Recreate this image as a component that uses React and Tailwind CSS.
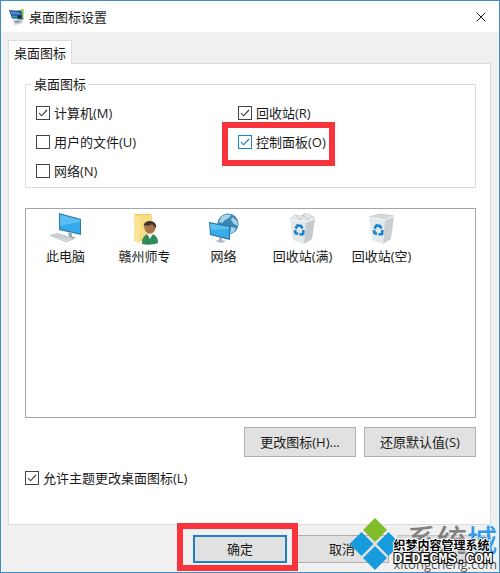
import { useState } from "react";
import { X } from "lucide-react";

const checkItems = [
  { id: "computer", label: "计算机(M)", checked: true },
  { id: "recycle", label: "回收站(R)", checked: true },
  { id: "files", label: "用户的文件(U)", checked: false },
  { id: "control", label: "控制面板(O)", checked: true, highlight: true },
  { id: "network", label: "网络(N)", checked: false },
];

const iconItems = [
  { label: "此电脑", Icon: ComputerIcon },
  { label: "赣州师专", Icon: UserFolderIcon },
  { label: "网络", Icon: NetworkIcon },
  { label: "回收站(满)", Icon: BinFullIcon },
  { label: "回收站(空)", Icon: BinEmptyIcon },
];

function TitleIcon() {
  return (
    <svg className="h-4 w-4" viewBox="0 0 16 16" aria-hidden="true">
      <path d="M7 2 14.500 0V11L9 12z" fill="#7cc043" />
      <path d="M0 1 12 2 13.500 10 3 9.500z" fill="#243f8f" />
      <path d="M1 2 10.500 3 11.500 6 2.200 5.500z" fill="#4a86cf" />
      <path d="M2.500 6.500 8 6.500 9 9 3.500 8.500z" fill="#2fa5a0" />
      <path d="M8 6.500 11.700 6.500 12.200 9.500 9 9z" fill="#1b2a63" />
      <path d="M4 11 12 10.500 14 14 6 16z" fill="#c7ced6" />
      <path d="M5.500 12 11 11.500 11.500 13 6.500 14z" fill="#8d99a6" />
    </svg>
  );
}

function ComputerIcon() {
  return (
    <svg className="h-8 w-8" viewBox="0 0 32 32" aria-hidden="true">
      <path d="M9 0 31 6V22L9 17z" fill="#2b7cb0" />
      <path d="M10 1.500 30 7V20.500L10 16z" fill="#35a9ea" />
      <path d="M10 1.500 30 7V9L10 13z" fill="#58bdf2" />
      <path d="M18 19.500 22 20.500v3l4 1-4 2-5-1.500 2-1z" fill="#9aa5ad" />
      <path d="M0 22.500 7 20.500 24 25.500 17 29z" fill="#dfe5e9" stroke="#a9b4bb" strokeWidth=".7" />
      <path d="M3 22.500 19 27M6 21.700 21.500 26M7 24l4-2M12 25.500l4-2" stroke="#b3bdc4" strokeWidth=".7" />
    </svg>
  );
}

function UserFolderIcon() {
  return (
    <svg className="h-8 w-8" viewBox="0 0 32 32" aria-hidden="true">
      <path d="M5 1h17v27H5z" fill="#efc95c" />
      <path d="M9 2h14v24H9z" fill="#f8dc83" />
      <path d="M5 1 11 5v26l-6-4z" fill="#fae49a" />
      <path d="M13 31c0-7 3-10 8-10s8 3 8 9c-5 2-11 2-16 1z" fill="#2f8a58" />
      <path d="M18 21 21 26 24 21z" fill="#e9f1ec" />
      <circle cx="21" cy="15" r="5.500" fill="#a9724c" />
      <path d="M15 15c-1-5 2-7 6-7s7 3 6 7c-2-1-3-3-4-4-2 2-5 2-7 1z" fill="#40342c" />
    </svg>
  );
}

function NetworkIcon() {
  return (
    <svg className="h-8 w-8" viewBox="0 0 32 32" aria-hidden="true">
      <circle cx="20" cy="11" r="10.500" fill="#3e86b4" />
      <path d="M13 4c3-3 8-3 10-2l-2 3-4 2-3 3-3-1zM24 4l5 4 1 5-4-2-3-4zM23 14l5 1-2 4-4 2z" fill="#a9d4e6" />
      <path d="M1 9 22 13V27L2 22z" fill="#2476aa" />
      <path d="M2 10.500 21 14V25.500L3 21z" fill="#39aaea" />
      <path d="M2 10.500 21 14V16L3 17z" fill="#5dbff2" />
      <path d="M11 24.500 14 25v2.500h4l-4 2.500-7-2 4-1z" fill="#a9b4bb" />
    </svg>
  );
}

function RecycleMark() {
  return (
    <g fill="none" stroke="#1a83cf" strokeWidth="2.600">
      <path d="M8.500 15.500 10.500 12.500l3.500.5 1.500 2.500" />
      <path d="M16.500 17 16 21l-3.500.5" />
      <path d="M11 21 8.500 20 8 17" />
    </g>
  );
}

function BinFullIcon() {
  return (
    <svg className="h-8 w-8" viewBox="0 0 32 32" aria-hidden="true">
      <path d="M3 6 8 2l6 1 4-3 5 2 5 3-2 6H6z" fill="#e6e9ec" stroke="#bfc5ca" strokeWidth=".7" />
      <path d="M9 3 13 7l4-5 3 5 4-3" stroke="#b5bcc2" fill="none" strokeWidth=".8" />
      <path d="M3 7 19 9 17 31 6 27z" fill="#e3e7ea" />
      <path d="M19 9 28 6 25 26 17 31z" fill="#c5cbd0" />
      <path d="M3 7 19 9 28 6" fill="none" stroke="#f7f8f9" />
      <RecycleMark />
    </svg>
  );
}

function BinEmptyIcon() {
  return (
    <svg className="h-8 w-8" viewBox="0 0 32 32" aria-hidden="true">
      <path d="M3 4 14 1 28 3 19 7z" fill="#d2d7da" stroke="#bcc3c7" strokeWidth=".7" />
      <path d="M3 4 19 7 17 31 6 27z" fill="#e6e9ec" />
      <path d="M19 7 28 3 25 26 17 31z" fill="#c9cfd3" />
      <path d="M3 4 19 7 28 3" fill="none" stroke="#f7f8f9" />
      <RecycleMark />
    </svg>
  );
}

function CheckBox({ id, label, defaultChecked, highlight }) {
  const [checked, setChecked] = useState(defaultChecked);

  return (
    <div className="relative flex h-5 items-center gap-1">
      <span className="relative flex h-3.5 w-3.5">
        <input
          id={id}
          type="checkbox"
          checked={checked}
          onChange={(e) => setChecked(e.target.checked)}
          className={`h-3.5 w-3.5 appearance-none border bg-white ${highlight ? "border-[#1883d7]" : "border-[#444444]"}`}
        />
        {checked && (
          <svg className="pointer-events-none absolute inset-0" viewBox="0 0 14 14" fill="none" aria-hidden="true">
            <path d="M3 7 5.500 9.800 11 4" stroke={highlight ? "#1f6fb0" : "#333333"} strokeWidth="1.100" />
          </svg>
        )}
      </span>
      <label htmlFor={id}>{label}</label>
      {highlight && (
        <span className="pointer-events-none absolute -top-2.5 -left-4 h-11 w-[113px] border-6 border-[#f8333c]" />
      )}
    </div>
  );
}

function Watermark() {
  return (
    <div className="pointer-events-none absolute right-0.5 bottom-0 z-20 flex items-end" aria-hidden="true">
      <svg className="-mr-2 mb-0.5 h-[52px] w-[52px] shrink-0" viewBox="0 0 52 52">
        <path d="M26 0 38 12 26 24 14 12z" fill="#80bd28" />
        <path d="M12.500 14 24.500 26 12.500 38 .5 26z" fill="#169bdc" />
        <path d="M39.500 14 51.500 26 39.500 38 27.500 26z" fill="#169bdc" />
        <path d="M26 28 38 40 26 52 14 40z" fill="#169bdc" />
      </svg>
      <div className="relative flex flex-col items-end">
        <span className="text-[30px] leading-8 font-medium text-[#808080]">
          系统<span className="text-[#2f9bea]">城</span>
        </span>
        <span className="text-[13px] leading-4 text-[#555555]">xitongcheng.com</span>
        <div className="absolute top-3.5 left-0 flex flex-col whitespace-nowrap">
          <span className="text-xs leading-4 font-bold text-black [paint-order:stroke_fill] [-webkit-text-stroke:2px_white]">
            织梦内容管理系统
          </span>
          <span className="font-['Liberation_Mono'] text-[15px] leading-3 font-bold text-white [paint-order:stroke_fill] [-webkit-text-stroke:2px_black]">
            DEDECMS.COM
          </span>
        </div>
      </div>
    </div>
  );
}

export default function App() {
  return (
    <div className="relative flex min-h-screen flex-col border border-[#3f8dc4] bg-[#f0f0f0] font-['Open_Sans','Noto_Sans_CJK_SC',sans-serif] text-[13px] leading-5 text-[#1a1a1a]">
      <header className="flex h-[31px] items-center justify-between bg-white pr-2.5 pl-2">
        <div className="flex items-center gap-1">
          <TitleIcon />
          <h1>桌面图标设置</h1>
        </div>
        <button type="button" aria-label="关闭">
          <X className="h-4 w-4" strokeWidth={1.5} />
        </button>
      </header>

      <main className="flex flex-1 flex-col pt-2 pr-2 pl-[7px]">
        <div role="tablist" className="flex">
          <button
            type="button"
            role="tab"
            aria-selected="true"
            className="relative -mb-px h-6 border border-b-0 border-[#dcdcdc] bg-white px-[5px]"
          >
            桌面图标
          </button>
        </div>

        <section className="flex flex-1 flex-col border border-[#dcdcdc] bg-white pt-2.5 pr-3.5 pb-9 pl-4">
          <fieldset className="border border-[#dcdcdc] px-2.5 pb-1.5">
            <legend className="-ml-1 px-0.5">桌面图标</legend>
            <div className="grid grid-cols-[202px_1fr] gap-y-[9px] pt-[9px]">
              {checkItems.map((item) => (
                <CheckBox
                  key={item.id}
                  id={item.id}
                  label={item.label}
                  defaultChecked={item.checked}
                  highlight={item.highlight}
                />
              ))}
            </div>
          </fieldset>

          <ul className="mt-5 flex flex-1 flex-wrap content-start border border-[#a3a5a9] pt-1">
            {iconItems.map(({ label, Icon }) => (
              <li key={label} className="flex w-[79px] flex-col items-center gap-px">
                <Icon />
                <span className="whitespace-nowrap">{label}</span>
              </li>
            ))}
          </ul>

          <div className="mt-[9px] flex justify-end gap-2">
            <button type="button" className="h-[30px] w-28 border border-[#adadad] bg-[#e1e1e1]">
              更改图标(H)...
            </button>
            <button type="button" className="h-[30px] w-28 border border-[#adadad] bg-[#e1e1e1]">
              还原默认值(S)
            </button>
          </div>

          <div className="mt-[11px]">
            <CheckBox id="allow-themes" label="允许主题更改桌面图标(L)" defaultChecked />
          </div>
        </section>
      </main>

      <footer className="flex justify-end gap-2 pt-2.5 pr-2 pb-[9px]">
        <div className="relative">
          <button type="button" className="h-7 w-[94px] border-2 border-[#1f7fc9] bg-[#e1e1e1]">
            确定
          </button>
          <span className="pointer-events-none absolute -top-3 -left-4 z-10 h-12 w-[121px] border-6 border-[#f8333c]" />
        </div>
        <button type="button" className="h-7 w-[94px] border border-[#adadad] bg-[#e1e1e1]">
          取消
        </button>
        <button type="button" aria-label="应用" disabled className="h-7 w-[94px] border border-[#c6c6c6] bg-[#dcdcdc]" />
      </footer>

      <Watermark />
    </div>
  );
}
